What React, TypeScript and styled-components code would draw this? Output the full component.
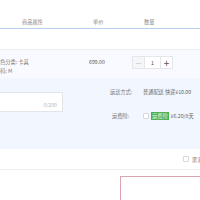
import React from "react";
import styled, { createGlobalStyle } from "styled-components";

const GlobalStyle = createGlobalStyle`
  body {
    margin: 0;
    background: #fff;
    font-family: "Noto Sans CJK SC", "Noto Sans", sans-serif;
    font-size: 5.2px;
    color: #666;
  }
`;

const Page = styled.div`
  width: 200px;
  height: 200px;
  overflow: hidden;
`;

const Shift = styled.div`
  margin-left: -14px;
  width: 240px;
`;

const HeadRow = styled.div`
  height: 29px;
  box-sizing: border-box;
  display: grid;
  grid-template-columns: 107px 51px 60px;
  align-items: end;
  padding-bottom: 2px;
  border-bottom: 1px solid #b7cff0;
  color: #888;
`;

const HeadCell = styled.div<{ $pad: number }>`
  padding-left: ${(p) => p.$pad}px;
  line-height: 8px;
`;

const Spacer = styled.div`
  height: 20px;
`;

const Order = styled.div`
  border-top: 1px solid #eef0f4;
  background: #f8faff;
`;

const ItemRow = styled.div`
  height: 28px;
  display: grid;
  grid-template-columns: 103px 43px 100px;
  padding-top: 5px;
  box-sizing: border-box;
`;

const Attrs = styled.div`
  padding: 2px 0 0 9px;
  line-height: 9px;
  color: #777;
`;

const Price = styled.div`
  padding-top: 2px;
  line-height: 9px;
  color: #555;
`;

const Stepper = styled.div`
  display: flex;
  height: 13px;
  margin-top: 1px;
`;

const StepBtn = styled.div<{ $off?: boolean }>`
  width: 13px;
  height: 13px;
  box-sizing: border-box;
  border: 1px solid #e4e6ea;
  background: ${(p) => (p.$off ? "#f5f6f8" : "#fff")};
  color: ${(p) => (p.$off ? "#c8c8c8" : "#555")};
  display: flex;
  align-items: center;
  justify-content: center;
  font-size: 10px;
  line-height: 1;
`;

const StepInput = styled.div`
  width: 15px;
  height: 13px;
  box-sizing: border-box;
  border-top: 1px solid #e4e6ea;
  border-bottom: 1px solid #e4e6ea;
  background: #fff;
  display: flex;
  align-items: center;
  justify-content: center;
  color: #444;
`;

const Extra = styled.div`
  background: #f1f6ff;
  height: 71px;
  display: grid;
  grid-template-columns: 124px 1fr;
  padding-top: 10px;
  box-sizing: border-box;
`;

const MemoCell = styled.div`
  padding-top: 4px;
`;

const Memo = styled.div`
  width: 77px;
  height: 20px;
  background: #fff;
  border: 1px solid #e2e5ea;
  box-sizing: border-box;
  display: flex;
  align-items: flex-end;
  justify-content: flex-end;
  padding: 0 5px 2px 0;
  color: #b5b5b5;
  line-height: 8px;
`;

const Options = styled.div`
  display: flex;
  flex-direction: column;
  gap: 16px;
`;

const OptRow = styled.div`
  display: grid;
  grid-template-columns: 19px 1fr;
  align-items: center;
  line-height: 8px;
`;

const OptLabel = styled.div`
  text-align: right;
  color: #777;
  white-space: nowrap;
`;

const OptValue = styled.div`
  display: flex;
  align-items: center;
  padding-left: 14px;
  color: #666;
  white-space: nowrap;
`;

const Check = styled.span`
  width: 6px;
  height: 6px;
  box-sizing: border-box;
  border: 1px solid #d8d8d8;
  background: #fff;
  border-radius: 1px;
  display: inline-block;
  flex-shrink: 0;
`;

const Tag = styled.span`
  background: #4caf50;
  color: #e8f5e9;
  padding: 0 1px;
  margin: 0 2px;
  line-height: 8px;
`;

const Footer = styled.div`
  height: 21px;
  border-bottom: 1px solid #f1f1f3;
  display: flex;
  justify-content: flex-end;
  align-items: center;
  box-sizing: border-box;
`;

const Anon = styled.div`
  display: flex;
  align-items: center;
  gap: 3px;
  margin-right: 13px;
  color: #888;
  white-space: nowrap;
`;

const PayRow = styled.div`
  display: flex;
  justify-content: flex-end;
  padding-top: 6px;
`;

const PayBox = styled.div`
  width: 105px;
  height: 40px;
  border: 1px solid #d9a6b0;
  border-right: none;
`;

export default function App() {
  return (
    <Page>
      <GlobalStyle />
      <Shift>
        <HeadRow>
          <HeadCell $pad={36}>商品属性</HeadCell>
          <HeadCell $pad={0}>单价</HeadCell>
          <HeadCell $pad={0}>数量</HeadCell>
        </HeadRow>
        <Spacer />
        <Order>
          <ItemRow>
            <Attrs>
              <div>颜色分类: 卡其</div>
              <div>尺码: M</div>
            </Attrs>
            <Price>699.00</Price>
            <Stepper>
              <StepBtn $off>−</StepBtn>
              <StepInput>1</StepInput>
              <StepBtn>+</StepBtn>
            </Stepper>
          </ItemRow>
          <Extra>
            <MemoCell>
              <Memo>0/200</Memo>
            </MemoCell>
            <Options>
              <OptRow>
                <OptLabel>运送方式:</OptLabel>
                <OptValue>普通配送 快递¥10.00</OptValue>
              </OptRow>
              <OptRow>
                <OptLabel>运费险:</OptLabel>
                <OptValue>
                  <Check />
                  <Tag>运费险</Tag>
                  ¥6.20/8天
                </OptValue>
              </OptRow>
            </Options>
          </Extra>
        </Order>
        <Footer>
          <Anon>
            <Check />
            匿名购买
          </Anon>
        </Footer>
        <PayRow>
          <PayBox />
        </PayRow>
      </Shift>
    </Page>
  );
}
